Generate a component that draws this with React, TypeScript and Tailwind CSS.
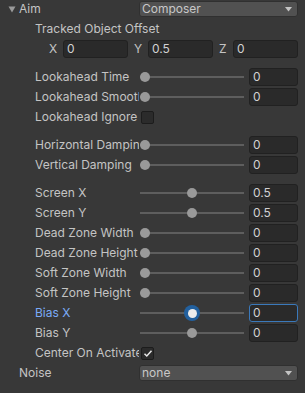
import React from "react";

const Field = ({ v, focus = false }: { v: string; focus?: boolean }) => (
  <div
    className={
      focus
        ? "ml-[5px] w-[49px] h-[18px] shrink-0 rounded-[3px] bg-[#2a2a2a] border border-[#3a79bb] pl-[3px] flex items-center text-[#d2d2d2]"
        : "ml-[5px] w-[49px] h-[18px] shrink-0 rounded-[3px] bg-[#2a2a2a] border border-[#212121] pl-[3px] flex items-center text-[#d2d2d2]"
    }
  >
    {v}
  </div>
);

const Label = ({ text, active = false }: { text: string; active?: boolean }) => (
  <div
    className={
      active
        ? "w-[104px] h-[18px] leading-[18px] shrink-0 overflow-hidden whitespace-nowrap text-[#7babf7]"
        : "w-[104px] h-[18px] leading-[18px] shrink-0 overflow-hidden whitespace-nowrap"
    }
  >
    {text}
  </div>
);

const SliderRow = ({
  label,
  value,
  mid = false,
  focus = false,
  cls = "",
}: {
  label: string;
  value: string;
  mid?: boolean;
  focus?: boolean;
  cls?: string;
}) => (
  <div className={"h-[18px] flex items-center pl-[35px] " + cls}>
    <Label text={label} active={focus} />
    <div className="relative ml-[1px] w-[104px] h-full shrink-0">
      <div className="absolute left-0 right-0 top-[8px] h-[2px] bg-[#5e5e5e]" />
      {focus ? (
        <div className="absolute left-[44px] top-[1px] w-[16px] h-[16px] rounded-full bg-[#22609e] flex items-center justify-center">
          <div className="w-[9px] h-[9px] rounded-full bg-[#ececec]" />
        </div>
      ) : (
        <div
          className={
            mid
              ? "absolute left-[47px] top-[4px] w-[10px] h-[10px] rounded-full bg-[#999999]"
              : "absolute left-0 top-[4px] w-[10px] h-[10px] rounded-full bg-[#999999]"
          }
        />
      )}
    </div>
    <Field v={value} focus={focus} />
  </div>
);

const Checkbox = ({ checked = false }: { checked?: boolean }) => (
  <div className="ml-[2px] w-[13px] h-[13px] rounded-[2px] bg-[#2b2b2b] border border-[#1c1c1c] flex items-center justify-center">
    {checked && (
      <svg width="10" height="9" viewBox="0 0 10 9">
        <polyline points="1.5,4.8 3.8,7 8.5,1.8" fill="none" stroke="#e8e8e8" strokeWidth="1.5" />
      </svg>
    )}
  </div>
);

const Dropdown = ({ text }: { text: string }) => (
  <div className="w-[159px] h-[16px] shrink-0 rounded-[3px] bg-[#515151] border border-[#303030] pl-[2px] pr-[5px] flex items-center justify-between text-[#c8c8c8]">
    <span>{text}</span>
    <svg width="7" height="5" viewBox="0 0 7 5">
      <polygon points="0,0 7,0 3.5,4.5" fill="#c4c4c4" />
    </svg>
  </div>
);

const Vec = ({ l, v }: { l: string; v: string }) => (
  <div className="flex items-center">
    <div className="w-[14px] shrink-0">{l}</div>
    <div className="w-[65px] h-[18px] rounded-[3px] bg-[#2a2a2a] border border-[#212121] pl-[3px] flex items-center text-[#d2d2d2]">
      {v}
    </div>
  </div>
);

export default function App() {
  return (
    <div className="w-[305px] h-[393px] bg-[#383838] font-['Inter',sans-serif] text-[12px] leading-[16px] text-[#c4c4c4] flex flex-col gap-[2px] overflow-hidden">
      <div className="h-[18px] flex items-center pl-[8px]">
        <svg width="8" height="7" viewBox="0 0 8 7" className="shrink-0">
          <polygon points="0.5,0.5 7.5,0.5 4,6.5" fill="#9a9a9a" />
        </svg>
        <div className="ml-[3px] w-[120px] shrink-0">Aim</div>
        <Dropdown text="Composer" />
      </div>
      <div className="h-[18px] flex items-center pl-[35px]">Tracked Object Offset</div>
      <div className="h-[18px] flex items-center pl-[49px] gap-[6px]">
        <Vec l="X" v="0" />
        <Vec l="Y" v="0.5" />
        <Vec l="Z" v="0" />
      </div>
      <SliderRow label="Lookahead Time" value="0" cls="mt-[8px]" />
      <SliderRow label="Lookahead Smoothing" value="0" />
      <div className="h-[18px] flex items-center pl-[35px]">
        <Label text="Lookahead Ignore Y" />
        <Checkbox />
      </div>
      <SliderRow label="Horizontal Damping" value="0" cls="mt-[8px]" />
      <SliderRow label="Vertical Damping" value="0" />
      <SliderRow label="Screen X" value="0.5" mid cls="mt-[8px]" />
      <SliderRow label="Screen Y" value="0.5" mid />
      <SliderRow label="Dead Zone Width" value="0" />
      <SliderRow label="Dead Zone Height" value="0" />
      <SliderRow label="Soft Zone Width" value="0" />
      <SliderRow label="Soft Zone Height" value="0" />
      <SliderRow label="Bias X" value="0" focus />
      <SliderRow label="Bias Y" value="0" mid />
      <div className="h-[18px] flex items-center pl-[35px]">
        <Label text="Center On Activate" />
        <Checkbox checked />
      </div>
      <div className="h-[18px] flex items-center pl-[19px]">
        <div className="w-[120px] shrink-0">Noise</div>
        <Dropdown text="none" />
      </div>
    </div>
  );
}
